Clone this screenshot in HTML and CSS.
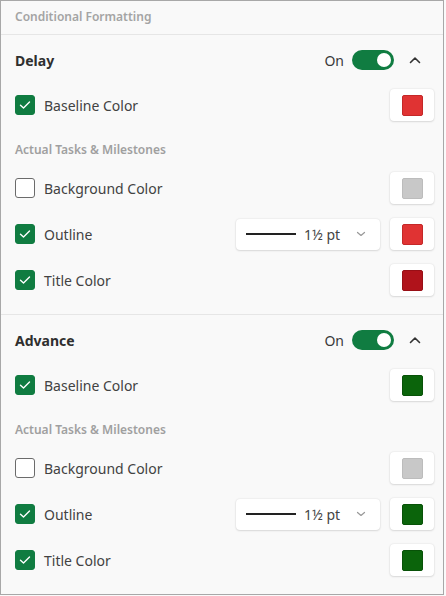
FILE: index.html
```html
<!DOCTYPE html>
<html>
<head>
<meta charset="utf-8">
<link rel="stylesheet" href="styles.css">
</head>
<body>
<div class="panel">
  <div class="panel-title">Conditional Formatting</div>

  <section class="section">
    <div class="sec-head">
      <span class="sec-name">Delay</span>
      <div class="sec-ctrl">
        <span class="on">On</span>
        <span class="toggle"><span class="knob"></span></span>
        <svg class="chev" width="12" height="8" viewBox="0 0 12 8"><path d="M1.5 6.5 L6 2 L10.5 6.5" fill="none" stroke="#333" stroke-width="1.6" stroke-linecap="round" stroke-linejoin="round"/></svg>
      </div>
    </div>
    <div class="row">
      <span class="cb on-cb"><svg width="12" height="10" viewBox="0 0 12 10"><path d="M1.5 5.2 L4.5 8 L10.5 2" fill="none" stroke="#fff" stroke-width="1.4" stroke-linecap="round" stroke-linejoin="round"/></svg></span>
      <span class="label">Baseline Color</span>
      <span class="swbtn"><span class="sw red"></span></span>
    </div>
    <div class="sub">Actual Tasks &amp; Milestones</div>
    <div class="row">
      <span class="cb"></span>
      <span class="label">Background Color</span>
      <span class="swbtn"><span class="sw grey"></span></span>
    </div>
    <div class="row">
      <span class="cb on-cb"><svg width="12" height="10" viewBox="0 0 12 10"><path d="M1.5 5.2 L4.5 8 L10.5 2" fill="none" stroke="#fff" stroke-width="1.4" stroke-linecap="round" stroke-linejoin="round"/></svg></span>
      <span class="label">Outline</span>
      <span class="dd"><span class="ln"></span><span class="ddtext">1½ pt</span><svg class="ddchev" width="10" height="6" viewBox="0 0 10 6"><path d="M1.5 1.5 L5 4.5 L8.5 1.5" fill="none" stroke="#999" stroke-width="1.2" stroke-linecap="round" stroke-linejoin="round"/></svg></span>
      <span class="swbtn"><span class="sw red"></span></span>
    </div>
    <div class="row">
      <span class="cb on-cb"><svg width="12" height="10" viewBox="0 0 12 10"><path d="M1.5 5.2 L4.5 8 L10.5 2" fill="none" stroke="#fff" stroke-width="1.4" stroke-linecap="round" stroke-linejoin="round"/></svg></span>
      <span class="label">Title Color</span>
      <span class="swbtn"><span class="sw darkred"></span></span>
    </div>
  </section>

  <section class="section last">
    <div class="sec-head">
      <span class="sec-name">Advance</span>
      <div class="sec-ctrl">
        <span class="on">On</span>
        <span class="toggle"><span class="knob"></span></span>
        <svg class="chev" width="12" height="8" viewBox="0 0 12 8"><path d="M1.5 6.5 L6 2 L10.5 6.5" fill="none" stroke="#333" stroke-width="1.6" stroke-linecap="round" stroke-linejoin="round"/></svg>
      </div>
    </div>
    <div class="row">
      <span class="cb on-cb"><svg width="12" height="10" viewBox="0 0 12 10"><path d="M1.5 5.2 L4.5 8 L10.5 2" fill="none" stroke="#fff" stroke-width="1.4" stroke-linecap="round" stroke-linejoin="round"/></svg></span>
      <span class="label">Baseline Color</span>
      <span class="swbtn"><span class="sw green"></span></span>
    </div>
    <div class="sub">Actual Tasks &amp; Milestones</div>
    <div class="row">
      <span class="cb"></span>
      <span class="label">Background Color</span>
      <span class="swbtn"><span class="sw grey"></span></span>
    </div>
    <div class="row">
      <span class="cb on-cb"><svg width="12" height="10" viewBox="0 0 12 10"><path d="M1.5 5.2 L4.5 8 L10.5 2" fill="none" stroke="#fff" stroke-width="1.4" stroke-linecap="round" stroke-linejoin="round"/></svg></span>
      <span class="label">Outline</span>
      <span class="dd"><span class="ln"></span><span class="ddtext">1½ pt</span><svg class="ddchev" width="10" height="6" viewBox="0 0 10 6"><path d="M1.5 1.5 L5 4.5 L8.5 1.5" fill="none" stroke="#999" stroke-width="1.2" stroke-linecap="round" stroke-linejoin="round"/></svg></span>
      <span class="swbtn"><span class="sw green"></span></span>
    </div>
    <div class="row">
      <span class="cb on-cb"><svg width="12" height="10" viewBox="0 0 12 10"><path d="M1.5 5.2 L4.5 8 L10.5 2" fill="none" stroke="#fff" stroke-width="1.4" stroke-linecap="round" stroke-linejoin="round"/></svg></span>
      <span class="label">Title Color</span>
      <span class="swbtn"><span class="sw green"></span></span>
    </div>
  </section>
</div>
</body>
</html>
```
FILE: styles.css
```css
* { box-sizing: border-box; }
html, body {
  margin: 0;
  padding: 0;
  background: #fafafa;
}
body {
  font-family: "Noto Sans", "Open Sans", sans-serif;
  font-size: 13px;
  color: #3a3a3a;
}
.panel {
  width: 444px;
  height: 595px;
  border: 1px solid #a8a8a8;
  background: #f9f9f9;
  display: flex;
  flex-direction: column;
}
.panel-title {
  height: 34px;
  line-height: 32px;
  padding-left: 14px;
  font-size: 12px;
  font-weight: 600;
  color: #a4a4a4;
  border-bottom: 1px solid #e6e6e6;
}
.section {
  display: flex;
  flex-direction: column;
  gap: 14px;
  padding: 10px 9px 18px 14px;
  border-bottom: 1px solid #e6e6e6;
}
.section.last {
  border-bottom: none;
}
.sec-head {
  height: 30px;
  display: flex;
  align-items: center;
  justify-content: space-between;
}
.sec-name {
  font-size: 14px;
  font-weight: 700;
  color: #2f2f2f;
}
.sec-ctrl {
  display: flex;
  align-items: center;
  padding-right: 13px;
}
.on {
  font-size: 14px;
  color: #3a3a3a;
  margin-right: 8px;
}
.toggle {
  width: 42px;
  height: 20px;
  border-radius: 10px;
  background: #107c41;
  display: flex;
  align-items: center;
  justify-content: flex-end;
  padding-right: 3px;
  margin-right: 15px;
}
.knob {
  width: 14px;
  height: 14px;
  border-radius: 50%;
  background: #fff;
}
.chev { display: block; }
.row {
  height: 32px;
  display: flex;
  align-items: center;
}
.cb {
  width: 20px;
  height: 20px;
  border-radius: 3px;
  border: 1px solid #6b6b6b;
  background: #fff;
  display: flex;
  align-items: center;
  justify-content: center;
  flex: none;
}
.cb.on-cb {
  background: #107c41;
  border-color: #107c41;
}
.label {
  margin-left: 9px;
  font-size: 14px;
  color: #424242;
  flex: 1;
}
.sub {
  height: 16px;
  line-height: 16px;
  margin-top: 7px;
  font-size: 12px;
  font-weight: 600;
  color: #a0a0a0;
}
.swbtn {
  width: 44px;
  height: 32px;
  border-radius: 4px;
  background: #fff;
  box-shadow: 0 0 2px rgba(0,0,0,0.12), 0 1px 2px rgba(0,0,0,0.1);
  display: flex;
  align-items: center;
  justify-content: center;
  flex: none;
}
.sw {
  width: 21px;
  height: 21px;
  border-radius: 2px;
}
.sw.red { background: #e03333; border: 1px solid #c42828; }
.sw.darkred { background: #b0131b; border: 1px solid #980f16; }
.sw.green { background: #0b640b; border: 1px solid #085208; }
.sw.grey { background: #c8c8c8; border: 1px solid #bcbcbc; }
.dd {
  width: 144px;
  height: 31px;
  margin-right: 10px;
  border-radius: 4px;
  background: #fff;
  box-shadow: 0 0 2px rgba(0,0,0,0.12), 0 1px 2px rgba(0,0,0,0.1);
  display: flex;
  align-items: center;
  padding-left: 10px;
  flex: none;
}
.ln {
  width: 50px;
  height: 2px;
  background: #222;
}
.ddtext {
  margin-left: 8px;
  font-size: 14px;
  color: #444;
}
.ddchev {
  margin-left: 16px;
}
```
